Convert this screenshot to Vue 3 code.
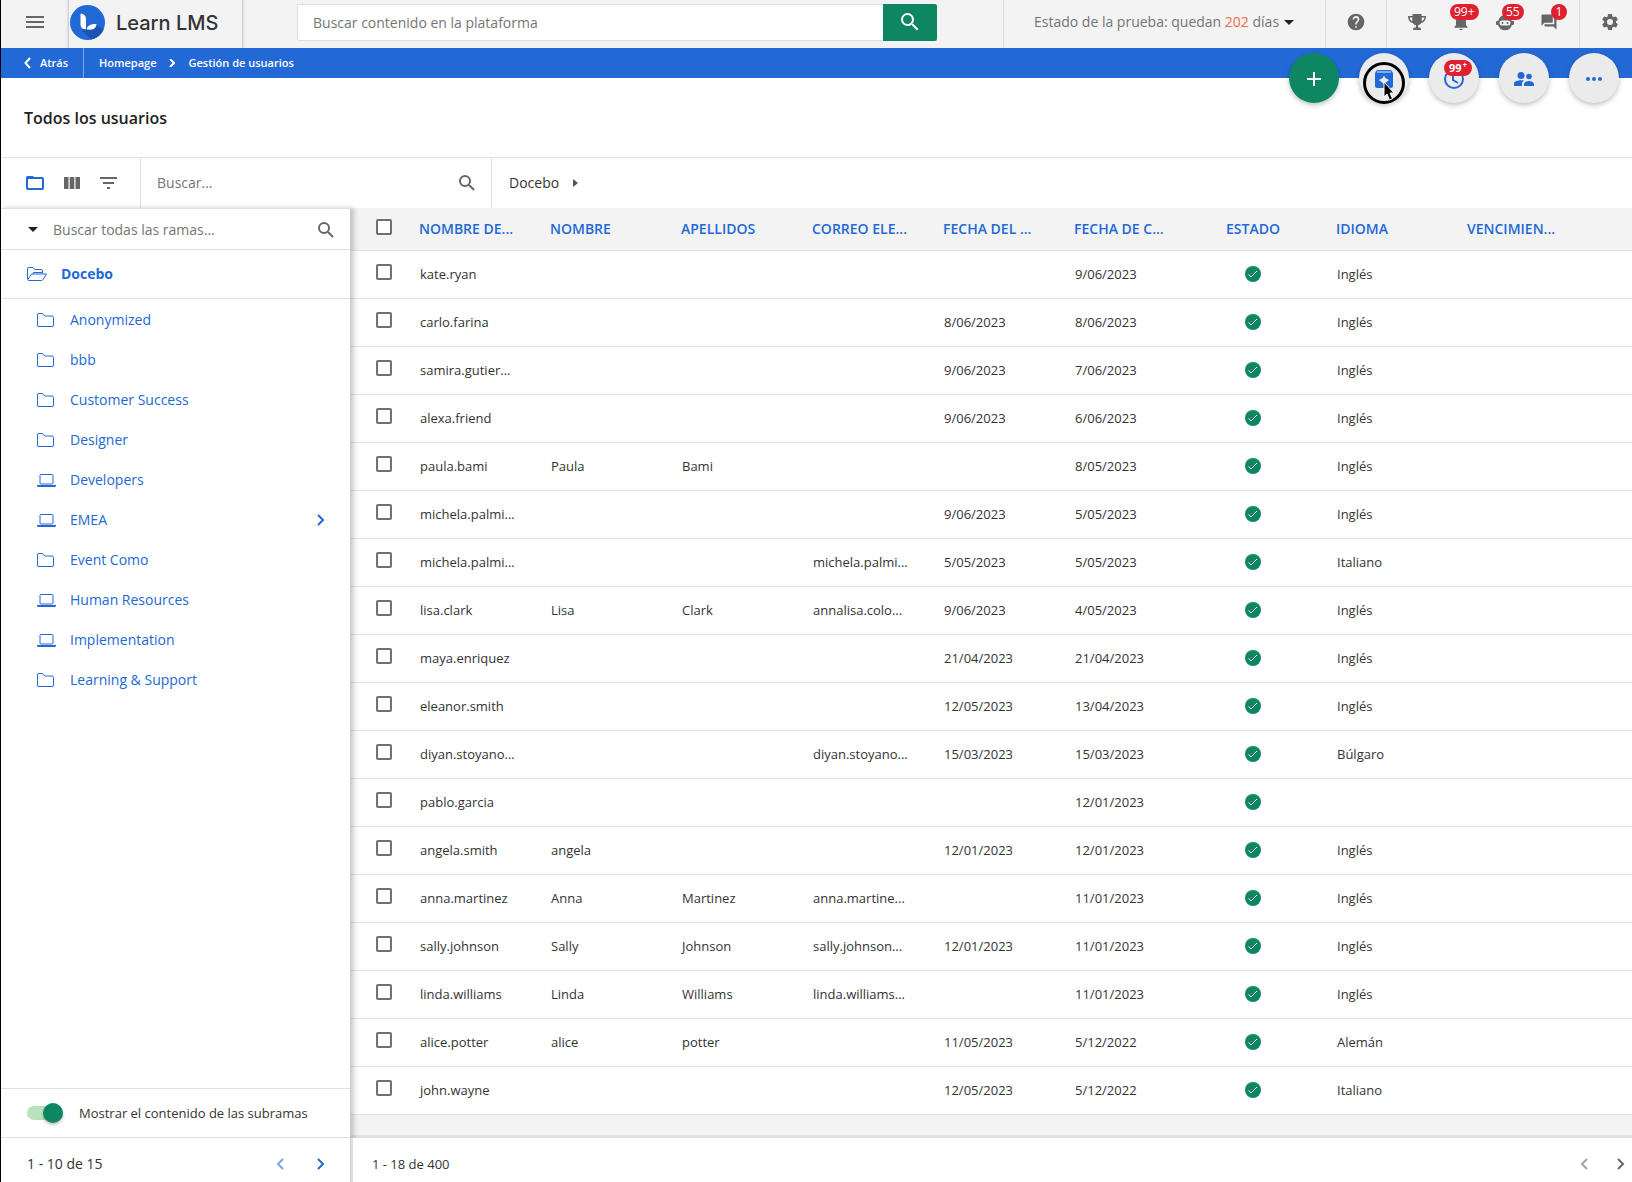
<script setup>
const columns = [
  { label: 'NOMBRE DE...', key: 'user' },
  { label: 'NOMBRE', key: 'first' },
  { label: 'APELLIDOS', key: 'last' },
  { label: 'CORREO ELE...', key: 'mail' },
  { label: 'FECHA DEL ...', key: 'access' },
  { label: 'FECHA DE C...', key: 'created' },
  { label: 'ESTADO', key: 'status' },
  { label: 'IDIOMA', key: 'lang' },
  { label: 'VENCIMIEN...', key: 'expiry' },
]

const rows = [
  ['kate.ryan', '', '', '', '', '9/06/2023', 'Inglés'],
  ['carlo.farina', '', '', '', '8/06/2023', '8/06/2023', 'Inglés'],
  ['samira.gutier...', '', '', '', '9/06/2023', '7/06/2023', 'Inglés'],
  ['alexa.friend', '', '', '', '9/06/2023', '6/06/2023', 'Inglés'],
  ['paula.bami', 'Paula', 'Bami', '', '', '8/05/2023', 'Inglés'],
  ['michela.palmi...', '', '', '', '9/06/2023', '5/05/2023', 'Inglés'],
  ['michela.palmi...', '', '', 'michela.palmi...', '5/05/2023', '5/05/2023', 'Italiano'],
  ['lisa.clark', 'Lisa', 'Clark', 'annalisa.colo...', '9/06/2023', '4/05/2023', 'Inglés'],
  ['maya.enriquez', '', '', '', '21/04/2023', '21/04/2023', 'Inglés'],
  ['eleanor.smith', '', '', '', '12/05/2023', '13/04/2023', 'Inglés'],
  ['diyan.stoyano...', '', '', 'diyan.stoyano...', '15/03/2023', '15/03/2023', 'Búlgaro'],
  ['pablo.garcia', '', '', '', '', '12/01/2023', ''],
  ['angela.smith', 'angela', '', '', '12/01/2023', '12/01/2023', 'Inglés'],
  ['anna.martinez', 'Anna', 'Martinez', 'anna.martine...', '', '11/01/2023', 'Inglés'],
  ['sally.johnson', 'Sally', 'Johnson', 'sally.johnson...', '12/01/2023', '11/01/2023', 'Inglés'],
  ['linda.williams', 'Linda', 'Williams', 'linda.williams...', '', '11/01/2023', 'Inglés'],
  ['alice.potter', 'alice', 'potter', '', '11/05/2023', '5/12/2022', 'Alemán'],
  ['john.wayne', '', '', '', '12/05/2023', '5/12/2022', 'Italiano'],
].map(([user, first, last, mail, access, created, lang]) => ({
  user, first, last, mail, access, created, lang, expiry: '',
}))

const branches = [
  { name: 'Anonymized', icon: 'folder' },
  { name: 'bbb', icon: 'folder' },
  { name: 'Customer Success', icon: 'folder' },
  { name: 'Designer', icon: 'folder' },
  { name: 'Developers', icon: 'laptop' },
  { name: 'EMEA', icon: 'laptop', children: true },
  { name: 'Event Como', icon: 'folder' },
  { name: 'Human Resources', icon: 'laptop' },
  { name: 'Implementation', icon: 'laptop' },
  { name: 'Learning & Support', icon: 'folder' },
]
</script>

<template>
  <div class="app">
    <header class="topbar">
      <button class="icon-btn menu" aria-label="Menú">
        <svg width="18" height="12" viewBox="0 0 18 12" stroke="currentColor" stroke-width="2"><path d="M0 1h18M0 6h18M0 11h18" /></svg>
      </button>
      <a class="logo" href="#">
        <svg width="35" height="35" viewBox="0 0 35 35">
          <circle cx="17.500" cy="17.500" r="17.500" fill="#2369d6" />
          <path d="M15 24.500 26.500 20l7.200 4.400A17.500 17.500 0 0 1 21 34.600L12 25z" fill="#1b54b4" />
          <path d="M10.500 8.500c3.400.3 5.500 2.400 5.500 6v9.800c-3.300.2-5.500-1.500-5.500-5z" fill="#fff" />
          <path d="M16.800 24.500c.3-3.600 3.200-5.500 9.700-5.500-.2 3.800-3 5.700-6.300 5.700z" fill="#fff" />
        </svg>
        <span>Learn LMS</span>
      </a>
      <form class="search" @submit.prevent>
        <input type="text" aria-label="Buscar contenido" placeholder="Buscar contenido en la plataforma" />
        <button aria-label="Buscar">
          <svg width="24" height="24" viewBox="0 0 24 24" fill="currentColor"><path d="M15.500 14h-.79l-.28-.27A6.471 6.471 0 0 0 16 9.500 6.500 6.500 0 1 0 9.500 16c1.610 0 3.090-.59 4.230-1.570l.27.28v.79l5 4.990L20.490 19l-4.990-5zm-6 0C7.010 14 5 11.990 5 9.500S7.010 5 9.500 5 14 7.010 14 9.500 11.990 14 9.500 14z" /></svg>
        </button>
      </form>
      <button class="trial">
        <span>Estado de la prueba: quedan <em>202</em> días</span>
        <svg width="10" height="5" viewBox="0 0 10 5"><path d="M0 0h10L5 5z" fill="#222" /></svg>
      </button>
      <button class="icon-btn help" aria-label="Ayuda">
        <svg width="20" height="20" viewBox="0 0 24 24" fill="currentColor"><path d="M12 2a10 10 0 1 0 0 20 10 10 0 0 0 0-20zm1 17h-2v-2h2v2zm2.070-7.750-.9.920C13.450 12.900 13 13.500 13 15h-2v-.5c0-1.100.45-2.100 1.170-2.830l1.240-1.260A2 2 0 1 0 10 9H8a4 4 0 1 1 7.070 2.250z" /></svg>
      </button>
      <div class="alerts">
        <button class="icon-btn" aria-label="Trofeos">
          <svg width="18" height="18" viewBox="0 0 18 18" fill="currentColor"><path d="M4.500 1h9v2H18c0 4-1.600 6.300-4.800 6.900-.7 1.200-1.700 2-3.200 2.300v2.300h1.500c1 0 1.500.8 1.500 2.500H5c0-1.700.5-2.500 1.500-2.500H8v-2.300c-1.500-.3-2.500-1.100-3.200-2.300C1.600 9.300 0 7 0 3h4.500zM1.600 4.500c.2 1.800.9 3.100 2.700 3.700V4.500zm14.800 0h-2.700v3.700c1.800-.6 2.500-1.900 2.700-3.700z" /></svg>
        </button>
        <button class="icon-btn" aria-label="Notificaciones">
          <svg width="20" height="20" viewBox="0 0 24 24" fill="currentColor"><path d="M12 22a2 2 0 0 0 2-2h-4a2 2 0 0 0 2 2zm6-6v-5c0-3.070-1.640-5.640-4.500-6.320V4a1.500 1.500 0 0 0-3 0v.68C7.630 5.360 6 7.920 6 11v5l-2 2v1h16v-1z" /></svg>
          <span class="badge">99+</span>
        </button>
        <button class="icon-btn" aria-label="Asistente">
          <svg width="18" height="18" viewBox="0 0 18 18"><path fill="#666" fill-rule="evenodd" d="M9 2a7 7 0 0 1 6.800 6H17a1 1 0 0 1 1 1v2a1 1 0 0 1-1 1h-1.200A7 7 0 0 1 2.200 12H1a1 1 0 0 1-1-1V9a1 1 0 0 1 1-1h1.200A7 7 0 0 1 9 2zM6 7.500a2.500 2.500 0 0 0 0 5h6a2.500 2.500 0 0 0 0-5z" /><circle cx="6.500" cy="10" r="1" fill="#666" /><circle cx="11.500" cy="10" r="1" fill="#666" /></svg>
          <span class="badge">55</span>
        </button>
        <button class="icon-btn" aria-label="Mensajes">
          <svg width="18" height="18" viewBox="0 0 24 24" fill="currentColor"><path d="M21 6h-2v9H6v2c0 .55.45 1 1 1h11l4 4V7c0-.55-.45-1-1-1zm-4 6V3c0-.55-.45-1-1-1H3c-.55 0-1 .45-1 1v14l4-4h10c.55 0 1-.45 1-1z" /></svg>
          <span class="badge">1</span>
        </button>
      </div>
      <button class="icon-btn settings" aria-label="Configuración">
        <svg width="20" height="20" viewBox="0 0 24 24" fill="currentColor"><path d="M19.140 12.940c.04-.3.060-.61.060-.94s-.02-.64-.07-.94l2.030-1.580a.49.49 0 0 0 .12-.61l-1.920-3.320a.49.49 0 0 0-.59-.22l-2.390.96a7 7 0 0 0-1.620-.94l-.36-2.540a.48.48 0 0 0-.48-.41h-3.840a.48.48 0 0 0-.47.41l-.36 2.540a7.400 7.400 0 0 0-1.620.94l-2.390-.96a.48.48 0 0 0-.59.220L2.740 8.870a.47.47 0 0 0 .12.61l2.030 1.580a6 6 0 0 0 0 1.880l-2.030 1.580a.49.49 0 0 0-.12.61l1.920 3.320c.12.220.37.290.59.220l2.390-.96c.5.380 1.030.7 1.620.94l.36 2.540c.05.240.24.410.48.410h3.840c.24 0 .44-.17.47-.41l.36-2.540a7 7 0 0 0 1.620-.94l2.390.96c.22.080.47 0 .59-.22l1.920-3.320a.47.47 0 0 0-.12-.61zM12 15.600a3.600 3.600 0 1 1 0-7.200 3.600 3.600 0 0 1 0 7.200z" /></svg>
      </button>
    </header>

    <div class="crumbs-wrap">
      <nav class="crumbs">
        <a class="back" href="#">
          <svg width="7" height="12" viewBox="0 0 7 12" fill="none" stroke="#fff" stroke-width="2"><path d="M6 1 1.500 6 6 11" /></svg>
          Atrás
        </a>
        <a href="#">Homepage</a>
        <svg width="6" height="8" viewBox="0 0 6 8" fill="none" stroke="#fff" stroke-width="2"><path d="m1 0 4 4-4 4" /></svg>
        <a href="#">Gestión de usuarios</a>
      </nav>
      <div class="fabs">
        <button class="fab add" aria-label="Añadir">
          <svg width="14" height="14" viewBox="0 0 14 14" stroke="#fff" stroke-width="2"><path d="M7 0v14M0 7h14" /></svg>
        </button>
        <button class="fab" aria-label="Importar">
          <svg width="18" height="18" viewBox="0 0 18 18"><path d="M2 0h14l2 3v13a2 2 0 0 1-2 2H2a2 2 0 0 1-2-2V3z" fill="#2369d6" /><path d="M2 2h14" stroke="#ebebeb" /><path d="M9 5.500l1.300 2.500L14 10l-5 4-5-4 3.700-2z" fill="#ebebeb" /></svg>
          <svg class="pointer" width="42" height="44" viewBox="0 0 42 44"><circle cx="21" cy="21" r="19.500" fill="none" stroke="#000" stroke-width="3" /><path d="M21 20v15l3-3 2.500 6 3-1.300L27 31h4z" fill="#000" stroke="#fff" /></svg>
        </button>
        <button class="fab" aria-label="Actividad">
          <svg width="20" height="20" viewBox="0 0 20 20" fill="none" stroke="#2369d6" stroke-width="2"><circle cx="10" cy="10" r="9" /><path d="M9 4v7l5 3" /></svg>
          <span class="badge small">99<sup>+</sup></span>
        </button>
        <button class="fab" aria-label="Grupos">
          <svg width="20" height="14" viewBox="0 0 20 14" fill="#2369d6"><circle cx="7" cy="3.500" r="3.500" /><circle cx="15" cy="4.500" r="2.800" /><path d="M0 14v-2.500C0 9.300 4 8.200 7 8.200c1 0 2 .1 3 .4-1.400.8-2 1.800-2 3V14zm10 0v-2c0-2 3-3 5-3s5 1 5 3v2z" /></svg>
        </button>
        <button class="fab" aria-label="Más">
          <svg width="16" height="4" viewBox="0 0 16 4" fill="#2369d6"><circle cx="2" cy="2" r="2" /><circle cx="8" cy="2" r="2" /><circle cx="14" cy="2" r="2" /></svg>
        </button>
      </div>
    </div>

    <h1>Todos los usuarios</h1>

    <div class="toolbar">
      <div class="views">
        <button class="icon-btn active" aria-label="Ramas">
          <svg width="18" height="14" viewBox="0 0 18 14"><rect x="1" y="2" width="16" height="11" rx="1" fill="none" stroke="currentColor" stroke-width="2" /><path d="M0 3V1.500Q0 0 1.500 0H7l2 2v1z" fill="currentColor" /></svg>
        </button>
        <button class="icon-btn" aria-label="Columnas">
          <svg width="16" height="12" viewBox="0 0 16 12" fill="currentColor"><path d="M0 0h4.500v12H0zM5.700 0h4.600v12H5.700zM11.500 0H16v12h-4.500z" /></svg>
        </button>
        <button class="icon-btn" aria-label="Filtrar">
          <svg width="17" height="12" viewBox="0 0 17 12" stroke="currentColor" stroke-width="2"><path d="M0 1h17M3 6h11M7 11h3" /></svg>
        </button>
      </div>
      <div class="user-search">
        <input type="text" aria-label="Buscar usuarios" placeholder="Buscar..." />
        <svg width="16" height="16" viewBox="0 0 16 16" fill="none" stroke="#666" stroke-width="2"><circle cx="6" cy="6" r="5" /><path d="m10 10 5 5" /></svg>
      </div>
      <div class="path">
        <a href="#">Docebo</a>
        <svg width="5" height="8" viewBox="0 0 5 8"><path d="M0 0v8l5-4z" fill="#555" /></svg>
      </div>
    </div>

    <main>
      <aside>
        <div class="branch-search">
          <svg width="10" height="5" viewBox="0 0 10 5"><path d="M0 0h10L5 5z" fill="#222" /></svg>
          <input type="text" aria-label="Buscar ramas" placeholder="Buscar todas las ramas..." />
          <svg width="16" height="16" viewBox="0 0 16 16" fill="none" stroke="#666" stroke-width="2"><circle cx="6" cy="6" r="5" /><path d="m10 10 5 5" /></svg>
        </div>
        <a class="root" href="#">
          <svg width="20" height="14" viewBox="0 0 20 14" fill="none" stroke="currentColor" stroke-linejoin="round"><path d="M.5 12V2Q.5.500 2 .5h4L7.500 2.500H14q1.500 0 1.500 1.500v2.500M.8 12.500 4.500 7h15L16 12.500q-.5 1-1.500 1H2Q1 13.500.8 12.500zM6 7l.5-1.500h9" /></svg>
          Docebo
        </a>
        <ul>
          <li v-for="b in branches" :key="b.name">
            <a href="#">
              <span class="branch-icon">
                <svg v-if="b.icon === 'folder'" width="17" height="14" viewBox="0 0 17 14" fill="none" stroke="currentColor" stroke-linejoin="round"><path d="M.5 2Q.5.500 2 .5h3.500L7.500 3H15q1.500 0 1.500 1.500V12q0 1.500-1.500 1.500H2Q.5 13.500.5 12z" /></svg>
                <svg v-else width="19" height="13" viewBox="0 0 19 13"><rect x="3" y=".5" width="13" height="9.500" rx="1" fill="none" stroke="currentColor" /><path d="M0 11h19v1l-1 1H1l-1-1z" fill="currentColor" /></svg>
              </span>
              {{ b.name }}
            </a>
            <button v-if="b.children" class="icon-btn next" aria-label="Abrir rama">
              <svg width="8" height="12" viewBox="0 0 8 12" fill="none" stroke="currentColor" stroke-width="2"><path d="m1 1 5 5-5 5" /></svg>
            </button>
          </li>
        </ul>
        <label class="switch">
          <input type="checkbox" role="switch" checked />
          Mostrar el contenido de las subramas
        </label>
        <div class="pager side">
          <span>1 - 10 de 15</span>
          <button class="icon-btn next off" aria-label="Ramas anteriores">
            <svg width="8" height="12" viewBox="0 0 8 12" fill="none" stroke="currentColor" stroke-width="2"><path d="M7 1 2 6l5 5" /></svg>
          </button>
          <button class="icon-btn next" aria-label="Ramas siguientes">
            <svg width="8" height="12" viewBox="0 0 8 12" fill="none" stroke="currentColor" stroke-width="2"><path d="m1 1 5 5-5 5" /></svg>
          </button>
        </div>
      </aside>

      <section>
        <div class="table-area">
          <table>
            <thead>
              <tr>
                <th class="tick"><input type="checkbox" aria-label="Seleccionar todo" /></th>
                <th v-for="c in columns" :key="c.key" :class="c.key">{{ c.label }}</th>
              </tr>
            </thead>
            <tbody>
              <tr v-for="(r, i) in rows" :key="i">
                <td class="tick"><input type="checkbox" :aria-label="r.user" /></td>
                <td v-for="c in columns" :key="c.key" :class="c.key">
                  <svg v-if="c.key === 'status'" width="16" height="16" viewBox="0 0 16 16"><circle cx="8" cy="8" r="8" fill="#0f8662" /><path d="m3.500 8.500 2.500 2.500 6-6" fill="none" stroke="#fff" /></svg>
                  <template v-else>{{ r[c.key] }}</template>
                </td>
              </tr>
            </tbody>
          </table>
        </div>
        <div class="pager users">
          <span>1 - 18 de 400</span>
          <button class="icon-btn off" aria-label="Página anterior">
            <svg width="8" height="12" viewBox="0 0 8 12" fill="none" stroke="currentColor" stroke-width="2"><path d="M7 1 2 6l5 5" /></svg>
          </button>
          <button class="icon-btn" aria-label="Página siguiente">
            <svg width="8" height="12" viewBox="0 0 8 12" fill="none" stroke="currentColor" stroke-width="2"><path d="m1 1 5 5-5 5" /></svg>
          </button>
        </div>
      </section>
    </main>
  </div>
</template>

<style>
body { background: #fff; }
</style>

<style scoped>
* { box-sizing: border-box; }
.app {
  display: flex;
  flex-direction: column;
  min-height: 100vh;
  border-left: 1px solid #000;
  font: 14px/20px "Open Sans", sans-serif;
  color: #333;
  white-space: nowrap;
}
svg { display: block; flex: none; }
a { color: inherit; text-decoration: none; }
button, input { font: inherit; color: inherit; margin: 0; }
button { border: 0; padding: 0; background: none; }
input[type="text"] { border: 0; padding: 0; outline: 0; background: none; flex: 1; min-width: 0; }
input::placeholder { color: #757575; opacity: 1; }
.icon-btn { position: relative; display: flex; align-items: center; justify-content: center; color: #666; }

.topbar { display: flex; align-items: stretch; height: 48px; background: #f3f3f3; }
.topbar > * { padding-bottom: 4px; }
.menu { width: 67px; }
.logo {
  display: flex;
  align-items: center;
  gap: 11px;
  width: 175px;
  padding-left: 1px;
  border: 1px solid #d2d2d2;
  border-top: 0;
  border-bottom: 0;
  box-shadow: 0 0 3px #ccc;
  font: 500 20px/28px Inter, sans-serif;
  color: #333;
}
.logo span { padding-top: 2px; }
.search { display: flex; flex: 1; margin: 4px 66px 7px 54px; padding: 0; }
.search input[type="text"] { padding: 0 15px; background: #fff; border: 1px solid #ddd; border-right: 0; border-radius: 2px 0 0 2px; }
.search button { width: 54px; display: grid; place-items: center; padding-bottom: 2px; background: #0f8662; color: #fff; border-radius: 0 2px 2px 0; }
.trial { display: flex; align-items: center; gap: 5px; width: 322px; padding-left: 30px; border-left: 1px solid #ddd; color: #757575; }
.trial em { font-style: normal; color: #f26a4b; }
.help { width: 61px; border-left: 1px solid #ddd; }
.alerts { display: flex; gap: 8px; width: 193px; padding-left: 12px; border-left: 1px solid #ddd; }
.alerts .icon-btn { width: 36px; }
.settings { width: 53px; padding-left: 8px; border-left: 1px solid #ddd; }
.badge {
  position: absolute;
  top: 4px;
  left: 50%;
  min-width: 16px;
  padding: 0 4px;
  border-radius: 8px;
  background: #e02030;
  color: #fff;
  font-size: 12px;
  line-height: 16px;
  text-align: center;
}
.alerts .badge { margin-left: -11px; }
.alerts .icon-btn:nth-child(3) .badge { margin-left: -3px; }
.alerts .icon-btn:nth-child(4) .badge { margin-left: 2px; }

.crumbs-wrap { position: relative; }
.crumbs { display: flex; align-items: center; gap: 13px; height: 30px; background: #2369d6; color: #fff; font-size: 11px; font-weight: 600; }
.back { display: flex; align-items: center; gap: 9px; width: 83px; height: 30px; margin-right: 2px; padding-left: 23px; border-right: 1px solid #7da6e8; }
.fabs { position: absolute; top: 5px; right: 13px; display: flex; gap: 20px; }
.fab { position: relative; display: grid; place-items: center; width: 50px; height: 50px; padding-top: 2px; border-radius: 50%; background: #ebebeb; box-shadow: 0 2px 5px rgba(0, 0, 0, .25); }
.fab.add { background: #0f8662; }
.pointer { position: absolute; left: 4px; top: 9px; }
.badge.small { top: 7px; left: 15px; padding: 0 5px; font-size: 11px; font-weight: 700; }
sup { margin-left: 1px; font-size: 8px; line-height: 8px; vertical-align: 4px; }

h1 { margin: 0; height: 79px; padding-left: 23px; font-size: 16px; line-height: 80px; font-weight: 600; color: #222; }

.toolbar { display: flex; height: 51px; border-top: 1px solid #e0e0e0; }
.views { display: flex; align-items: center; width: 140px; padding-left: 15px; border-right: 1px solid #e0e0e0; }
.views .icon-btn { width: 37px; height: 40px; }
.views .active { color: #2369d6; }
.user-search { display: flex; align-items: center; width: 351px; padding: 0 16px; border-right: 1px solid #e0e0e0; }
.path { display: flex; align-items: center; gap: 14px; padding-left: 17px; }

main { display: flex; flex: 1; }
aside {
  position: relative;
  display: flex;
  flex-direction: column;
  width: 350px;
  border-top: 1px solid #e0e0e0;
  border-right: 1px solid #ccc;
  background: #fff;
  box-shadow: 3px 0 5px rgba(0, 0, 0, .2);
}
.branch-search { display: flex; align-items: center; gap: 15px; height: 41px; padding: 1px 16px 0 27px; border-bottom: 1px solid #e0e0e0; }
.root { display: flex; align-items: center; gap: 14px; height: 49px; padding-left: 26px; border-bottom: 1px solid #e0e0e0; color: #2369d6; font-weight: 700; }
ul { flex: 1; margin: 0; padding: 1px 25px 0 36px; list-style: none; }
li { display: flex; align-items: center; justify-content: space-between; height: 40px; color: #2369d6; }
li a { display: flex; align-items: center; }
.branch-icon { width: 33px; }
.next { color: #2369d6; }
.switch { display: flex; align-items: center; gap: 16px; height: 49px; padding-left: 26px; border-top: 1px solid #e0e0e0; font-size: 13px; }
.switch input { position: relative; appearance: none; width: 36px; height: 14px; border-radius: 7px; background: #b9e3bc; }
.switch input::after { content: ""; position: absolute; right: 0; top: -3px; width: 20px; height: 20px; border-radius: 50%; background: #0f8662; box-shadow: 0 2px 3px rgba(0, 0, 0, .25); }
.pager { display: flex; align-items: center; gap: 29px; height: 44px; padding: 7px 7px 0 19px; background: #fff; }
.pager span { flex: 1; }
.pager.side { gap: 33px; height: 45px; padding: 8px 25px 0 26px; border-top: 1px solid #e0e0e0; }
.pager.users { position: relative; z-index: 1; border-left: 2px solid #e0e0e0; font-size: 13px; }
.off { opacity: .6; }

section { display: flex; flex-direction: column; flex: 1; min-width: 0; }
.table-area { flex: 1; background: #f3f3f3; border-bottom: 3px solid #e0e0e0; }
table { width: 100%; table-layout: fixed; border-collapse: separate; border-spacing: 0; }
th, td { width: 131px; padding: 0 35px 0 0; border-bottom: 1px solid #e0e0e0; text-align: left; }
th { height: 43px; font-weight: 600; color: #2369d6; }
td { height: 48px; padding: 0 34px 2px 1px; background: #fff; font-size: 13px; }
.tick { width: 68px; padding: 0 0 4px 25px; }
td.tick { padding-bottom: 6px; }
.expiry { width: auto; }
.status { text-align: center; }
td.status { padding-left: 0; padding-right: 35px; }
.status svg { margin: 0 auto; }
.tick input { display: block; appearance: none; width: 16px; height: 16px; border: 2px solid #707070; border-radius: 2px; background: #fff; }
</style>
